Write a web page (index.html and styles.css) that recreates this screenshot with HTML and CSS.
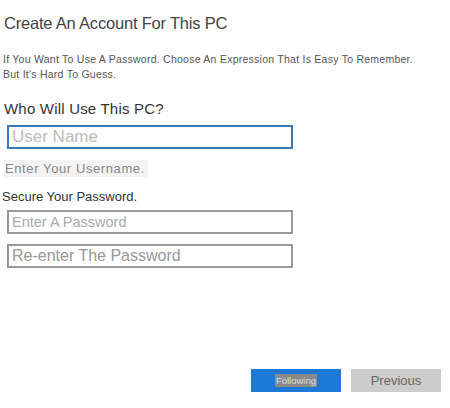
FILE: index.html
```html
<!DOCTYPE html>
<html lang="en">
<head>
    <meta charset="UTF-8">
    <meta name="viewport" content="width=device-width, initial-scale=1.0">
    <title>Create An Account For This PC</title>
    <link rel="stylesheet" href="styles.css">
</head>
<body>
    <div class="page">
        <h1>Create An Account For This PC</h1>
        <p class="intro">If You Want To Use A Password. Choose An Expression That Is Easy To Remember.<br>But It's Hard To Guess.</p>

        <h2>Who Will Use This PC?</h2>
        <input type="text" class="field active" placeholder="User Name">
        <div class="hint">Enter Your Username.</div>

        <h3>Secure Your Password.</h3>
        <input type="password" class="field small" placeholder="Enter A Password">
        <input type="password" class="field" placeholder="Re-enter The Password">

        <div class="actions">
            <button class="btn primary"><span>Following</span></button>
            <button class="btn">Previous</button>
        </div>
    </div>
</body>
</html>
```

FILE: styles.css
```css
body {
    margin: 0;
    background: #fff;
    font-family: "Liberation Sans", Arial, sans-serif;
    color: #333;
}
.page {
    width: 450px;
    height: 408px;
    display: flex;
    flex-direction: column;
    box-sizing: border-box;
    padding: 14px 0 0 0;
}
h1 {
    margin: 0 0 0 4px;
    font-size: 16.5px;
    font-weight: normal;
    color: #444;
    letter-spacing: -0.2px;
}
.intro {
    margin: 19px 0 0 3px;
    font-size: 10.5px;
    line-height: 15px;
    color: #555;
    letter-spacing: 0.25px;
}
h2 {
    margin: 18px 0 0 4px;
    font-size: 15px;
    font-weight: normal;
    color: #333;
    letter-spacing: 0.2px;
}
.field {
    display: block;
    width: 286px;
    height: 24px;
    margin: 10px 0 0 7px;
    padding: 0 0 0 3px;
    box-sizing: border-box;
    border: 2px solid #999;
    font-family: "Liberation Sans", Arial, sans-serif;
    font-size: 16px;
    outline: none;
}
.field::placeholder {
    color: #999;
}
.field.active {
    margin-top: 8px;
    font-size: 17px;
    border-color: #3a79b8;
}
.field.active::placeholder {
    color: #bbb;
}
.field.small {
    font-size: 14.5px;
}
.field.small::placeholder {
    color: #aaa;
}
.hint {
    align-self: flex-start;
    margin: 11px 0 0 4px;
    padding: 1px 3px 1px 1px;
    background: #f3f3f3;
    font-size: 13px;
    color: #888;
    letter-spacing: 0.6px;
}
h3 {
    margin: 12px 0 0 2px;
    font-size: 13px;
    font-weight: normal;
    color: #333;
}
h3 + .field {
    margin-top: 6px;
}
.actions {
    display: flex;
    gap: 10px;
    margin: auto 9px 16px auto;
}
.btn {
    width: 90px;
    height: 23px;
    border: none;
    background: #ccc;
    font-family: "Liberation Sans", Arial, sans-serif;
    font-size: 13px;
    color: #666;
    padding: 0;
}
.btn.primary {
    background: #1e78d6;
    font-size: 9.5px;
    color: #ddd;
}
.btn.primary span {
    background: #8a8a8a;
    padding: 1px 1px;
}
```
